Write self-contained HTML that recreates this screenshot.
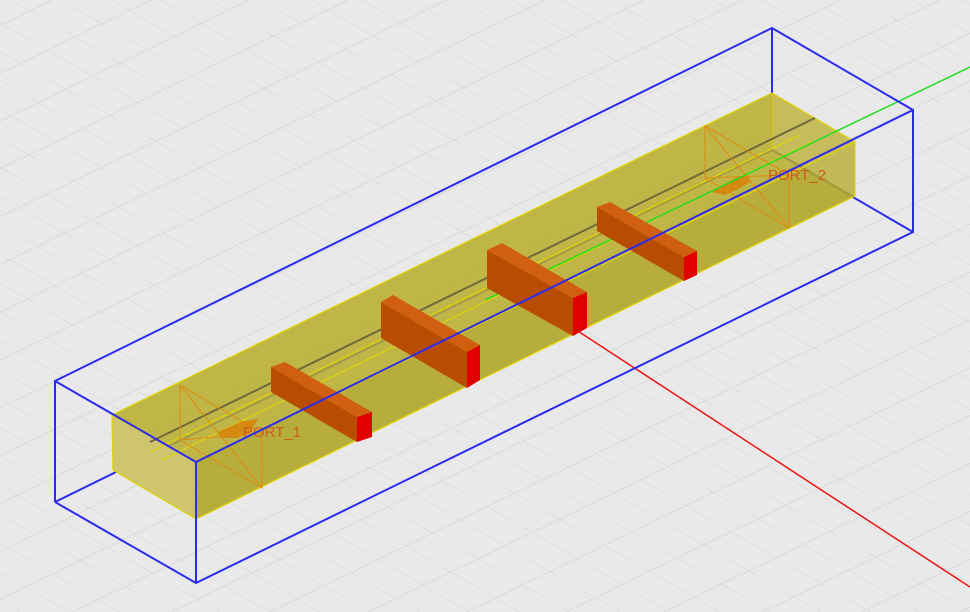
<!DOCTYPE html>
<html><head><meta charset="utf-8"><style>
html,body{margin:0;padding:0;background:#e9e9e9;width:970px;height:612px;overflow:hidden}
svg{display:block}
text{font-family:"Liberation Sans",sans-serif}
</style></head><body>
<svg width="970" height="612" viewBox="0 0 970 612" xmlns="http://www.w3.org/2000/svg">
<defs>
<pattern id="g" width="10" height="10" patternUnits="userSpaceOnUse" patternTransform="matrix(2.72,-1.32,4.5,2.6,2,24)">
<path d="M0 0H10M0 0V10" stroke="#d2d2d2" stroke-width="0.3" fill="none"/>
</pattern>
</defs>
<rect width="970" height="612" fill="#e9e9e9"/>
<rect width="970" height="612" fill="url(#g)"/>

<g stroke="#2b2bf0" stroke-width="2" fill="none">
<line x1="55" y1="502" x2="772" y2="150"/>
<line x1="772" y1="150" x2="913" y2="232"/>
<line x1="772" y1="28" x2="772" y2="150"/>
</g>

<polygon points="112,415 772,93 855,142 196,462" fill="#b8ad2a" fill-opacity="0.85"/>
<polygon points="196,462 855,142 855,196 196,519" fill="#b0a62a" fill-opacity="0.9"/>
<polygon points="112,415 196,462 196,519 113,470" fill="#cfc56e"/>
<polygon points="772,93 855,142 855,196 772,148" fill="#c9c06a" fill-opacity="0.6"/>
<g stroke="#e0d400" stroke-width="1.2" fill="none">
<polyline points="112,415 772,93 855,142 855,196 196,519 113,470 112,415"/>
<polyline points="112,415 196,462 855,142"/>
<line x1="196" y1="462" x2="196" y2="519"/>
<line x1="772" y1="93" x2="772" y2="148"/>
<line x1="150" y1="452" x2="800" y2="135"/>
<line x1="162" y1="460" x2="812" y2="142"/>
</g>
<line x1="150" y1="442" x2="815" y2="118" stroke="#6e6a3a" stroke-width="2"/>

<g stroke="#e08a10" stroke-width="1" fill="none">
<polygon points="180,385 262,433 262,488 180,440"/>
<line x1="180" y1="385" x2="262" y2="488"/>
<line x1="180" y1="440" x2="262" y2="433"/>
<polygon points="705,126 789,175 789,228 705,178"/>
<line x1="705" y1="126" x2="789" y2="228"/>
<line x1="705" y1="178" x2="789" y2="175"/>
</g>
<polygon points="218,432 240,422 258,419 250,432 238,438 222,438" fill="#d48a10"/>
<polygon points="712,192 735,178 748,175 750,182 740,188 725,195" fill="#d48a10"/>
<text x="243" y="437" font-size="15" fill="#d05a20">PORT_1</text>
<text x="768" y="180" font-size="15" fill="#d05a20">PORT_2</text>

<line x1="515" y1="290" x2="970" y2="587" stroke="#ee1010" stroke-width="1.5"/>
<line x1="485" y1="300" x2="970" y2="67" stroke="#20dd20" stroke-width="1.5"/>

<g>
<polygon points="271,367 357,417 357,442 271,392" fill="#b84c00"/>
<polygon points="271,367 285,362 372,412 357,417" fill="#d06010"/>
<polygon points="357,417 372,412 372,437 357,442" fill="#e00000"/>

<polygon points="381,302 467,352 467,388 381,338" fill="#b84c00"/>
<polygon points="381,302 393,295 480,345 467,352" fill="#d06010"/>
<polygon points="467,352 480,345 480,380 467,388" fill="#e00000"/>

<polygon points="487,250 573,298 573,336 487,288" fill="#b84c00"/>
<polygon points="487,250 502,243 587,292 573,298" fill="#d06010"/>
<polygon points="573,298 587,292 587,328 573,336" fill="#e00000"/>

<polygon points="597,207 684,257 684,281 597,231" fill="#b84c00"/>
<polygon points="597,207 610,202 697,251 684,257" fill="#d06010"/>
<polygon points="684,257 697,251 697,275 684,281" fill="#e00000"/>
</g>

<g stroke="#2b2bf0" stroke-width="2" fill="none">
<polyline points="55,502 55,381 772,28 913,110 913,232 196,583 55,502"/>
<polyline points="55,381 196,462 913,110"/>
<line x1="196" y1="462" x2="196" y2="583"/>
</g>
</svg>
</body></html>
